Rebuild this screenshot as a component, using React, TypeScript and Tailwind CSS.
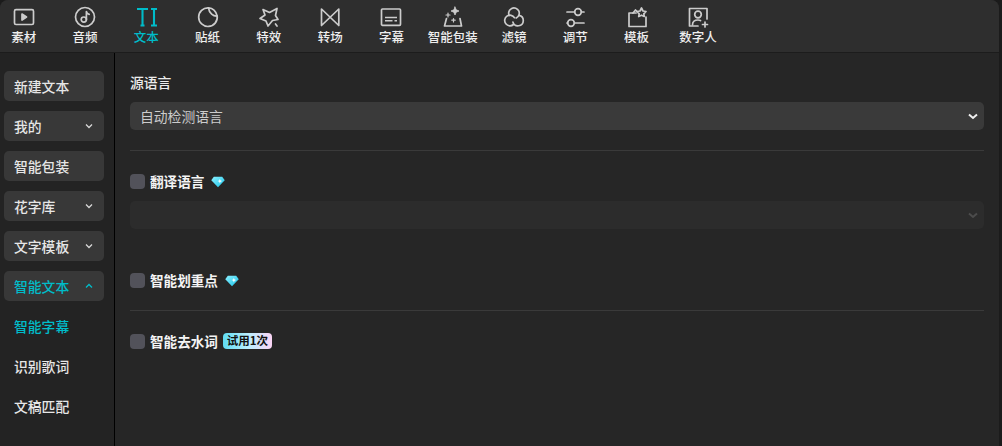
import React from "react";

const stroke = "#cccccc";
const active = "#00bcc9";

const common = { fill: "none", strokeWidth: 1.7, strokeLinecap: "round" as const, strokeLinejoin: "round" as const };

const icons: Record<string, (c: string) => React.ReactNode> = {
  material: (c) => (
    <g {...common} stroke={c}>
      <rect x="2.5" y="4.7" width="19" height="14.8" rx="1.5" />
      <path d="M10 9 L14.5 12 L10 15 Z" fill={c} />
    </g>
  ),
  audio: (c) => (
    <g {...common} stroke={c}>
      <circle cx="12" cy="12" r="9.5" />
      <circle cx="10.8" cy="14.6" r="2.6" />
      <path d="M13.4 14.6 V6.5 Q13.8 8.8 16.2 9.4" />
    </g>
  ),
  text: (c) => (
    <g fill="none" stroke={c} strokeWidth="2.1">
      <path d="M3 4 H14 M8.5 4 V20.5 M6.5 20.5 H10.5" />
      <path d="M17 4 H23 M20 4 V20.5 M17 20.5 H23" />
    </g>
  ),
  sticker: (c) => (
    <g {...common} stroke={c}>
      <path d="M12.5 2.9 A9.3 9.3 0 1 0 21.2 11" />
      <path d="M12.5 2.9 C17 3.2 20 6.5 21.2 11 C17.5 11.5 13 8 12.5 2.9 Z" />
    </g>
  ),
  effect: (c) => (
    <g {...common} stroke={c}>
      <path d="M6 4.5 L12.5 7.5 L20 3.5 L18.5 10.5 L21 14.5 L15.5 15.5 L11 21 L9 16 L3 13.5 L8 10 Z" />
      <path d="M18.5 19 L20 21" />
    </g>
  ),
  transition: (c) => (
    <g {...common} stroke={c}>
      <path d="M3.5 4 L20.8 20.5 V4 L3.5 20.5 Z" />
    </g>
  ),
  caption: (c) => (
    <g {...common} stroke={c}>
      <rect x="2.5" y="4" width="19" height="16.3" rx="1" />
      <path d="M6 12.5 H18 M6 15.7 H13.5 M15.5 15.7 H18" strokeLinecap="butt" strokeWidth="1.4" />
    </g>
  ),
  packaging: (c) => (
    <g {...common} stroke={c}>
      <path d="M5.5 13.5 L3.5 21 H20.5 L19 13.5" />
      <path d="M14 2 L15.2 4.8 L18 6 L15.2 7.2 L14 10 L12.8 7.2 L10 6 L12.8 4.8 Z" fill={c} strokeWidth="0.8" />
      <path d="M7 8 V12 M5 10 H9 M12.5 13.5 V17 M10.8 15.2 H14.2" strokeWidth="1.2" />
    </g>
  ),
  filter: (c) => (
    <g {...common} stroke={c}>
      <path d="M7.2 10.5 A5.3 5.3 0 1 1 14.2 13" />
      <path d="M17 10.3 A5.3 5.3 0 1 1 10.9 17" />
      <path d="M11.5 19.5 A5.3 5.3 0 1 1 12.5 12.7" />
    </g>
  ),
  adjust: (c) => (
    <g {...common} stroke={c}>
      <path d="M4 7 H11.5 M18.5 7 H21 M4 18 H4.5 M11.5 18 H21" />
      <circle cx="15" cy="7" r="3.3" />
      <circle cx="8" cy="18" r="3.3" />
    </g>
  ),
  template: (c) => (
    <g {...common} stroke={c}>
      <path d="M11 8 H4 V21.5 H21 V12" />
      <path d="M8 8 L10.5 5 L12 6.5" />
      <path d="M16.5 3 L18 6 L21 6.5 L18.8 8.8 L19.3 11.5 L16.5 10.2 L13.7 11.5 L14.2 8.8 L12 6.5 L15 6 Z" />
    </g>
  ),
  avatar: (c) => (
    <g {...common} stroke={c}>
      <path d="M12 21 H3.5 V3.5 H21 V14" />
      <circle cx="12" cy="9.5" r="3.3" />
      <path d="M6.5 20 Q6.5 15 12 15 Q13.5 15 14.5 15.5" />
      <path d="M19 17 V22 M16.5 19.5 H21.5" />
    </g>
  ),
};

const tabs = [
  ["素材", "material"],
  ["音频", "audio"],
  ["文本", "text"],
  ["贴纸", "sticker"],
  ["特效", "effect"],
  ["转场", "transition"],
  ["字幕", "caption"],
  ["智能包装", "packaging"],
  ["滤镜", "filter"],
  ["调节", "adjust"],
  ["模板", "template"],
  ["数字人", "avatar"],
];

function Chevron({ up, color }: { up?: boolean; color: string }) {
  return (
    <svg width="8" height="6" viewBox="0 0 8 6" fill="none">
      <path d={up ? "M1 4.5 L4 1.5 L7 4.5" : "M1 1.5 L4 4.5 L7 1.5"} stroke={color} strokeWidth="1.3" />
    </svg>
  );
}

function SelectChevron({ color }: { color: string }) {
  return (
    <svg width="10" height="7" viewBox="0 0 10 7" fill="none">
      <path d="M1 1.5 L5 5 L9 1.5" stroke={color} strokeWidth="2" />
    </svg>
  );
}

function Diamond({ id }: { id: string }) {
  return (
    <svg width="14" height="12" viewBox="0 0 15 12" className="translate-y-[1px]">
      <defs>
        <linearGradient id={id} x1="0" y1="0" x2="1" y2="1">
          <stop offset="0" stopColor="#8df0ff" />
          <stop offset="1" stopColor="#18c4ea" />
        </linearGradient>
      </defs>
      <path d="M3 0.5 H12 L14.7 4 L7.5 11.5 L0.3 4 Z" fill={`url(#${id})`} />
      <path d="M9.5 2.5 L10.2 4.3 L12 5 L10.2 5.7 L9.5 7.5 L8.8 5.7 L7 5 L8.8 4.3 Z" fill="#ffffff" />
    </svg>
  );
}

function SideButton({ label, chevron, on }: { label: string; chevron?: "up" | "down"; on?: boolean }) {
  return (
    <div className="flex h-[30px] w-[100px] items-center justify-between rounded-[5px] bg-[#383838] pr-[11px] pl-2.5">
      <span className={`text-[13.8px] font-medium ${on ? "text-[#00bcc9]" : "text-[#e6e6e6]"}`}>{label}</span>
      {chevron && <Chevron up={chevron === "up"} color={on ? "#00bcc9" : "#d8d8d8"} />}
    </div>
  );
}

function Check({ label, children }: { label: string; children?: React.ReactNode }) {
  return (
    <div className="flex h-[16px] items-center">
      <div className="h-[15px] w-[15px] rounded-[4px] bg-[#52525a]" />
      <span className="ml-[5px] text-[13.6px] font-bold text-[#f4f4f4]">{label}</span>
      {children}
    </div>
  );
}

export default function App() {
  return (
    <div
      className="h-[446px] w-[1002px] overflow-hidden bg-[#1b1b1b]"
      style={{ fontFamily: '"Noto Sans CJK SC", "Liberation Sans", sans-serif' }}
    >
      <div className="flex h-full w-[999px] flex-col overflow-hidden rounded-t-lg bg-[#262626]">
        <div className="flex h-[53px] shrink-0 border-b border-[#1c1c1c] bg-[#2e2e2e]">
          <div className="-ml-[7px] flex">
            {tabs.map(([label, key]) => {
              const on = label === "文本";
              return (
                <div key={key} className="flex w-[61.3px] flex-col items-center pt-[5px]">
                  <svg width="24" height="24" viewBox="0 0 24 24">
                    {icons[key](on ? active : stroke)}
                  </svg>
                  <span
                    className={`whitespace-nowrap text-[12.5px] leading-[16px] font-medium ${
                      on ? "text-[#00bcc9]" : "text-[#eeeeee]"
                    }`}
                  >
                    {label}
                  </span>
                </div>
              );
            })}
          </div>
        </div>
        <div className="flex min-h-0 flex-1">
          <div className="flex w-[115px] shrink-0 flex-col gap-[10px] border-r border-black bg-[#232323] pt-[18px] pl-1">
            <SideButton label="新建文本" />
            <SideButton label="我的" chevron="down" />
            <SideButton label="智能包装" />
            <SideButton label="花字库" chevron="down" />
            <SideButton label="文字模板" chevron="down" />
            <SideButton label="智能文本" chevron="up" on />
            <div className="flex h-[30px] items-center pl-2.5 text-[13.8px] font-medium text-[#00bcc9]">智能字幕</div>
            <div className="flex h-[30px] items-center pl-2.5 text-[13.8px] font-medium text-[#e6e6e6]">识别歌词</div>
            <div className="flex h-[30px] items-center pl-2.5 text-[13.8px] font-medium text-[#e6e6e6]">文稿匹配</div>
          </div>
          <div className="flex flex-1 flex-col pt-[19px] pr-[15px] pl-[15px]">
            <div className="text-[13.8px] leading-[20px] font-medium text-[#ececec]">源语言</div>
            <div className="mt-[10px] flex h-[28px] items-center justify-between rounded-[5px] bg-[#3a3a3a] pr-[6px] pl-2.5">
              <span className="text-[13.8px] text-[#cccccc]">自动检测语言</span>
              <SelectChevron color="#f0f0f0" />
            </div>
            <div className="mt-[20px] h-px bg-[#3a3a3a]" />
            <div className="mt-[22px]">
              <Check label="翻译语言">
                <span className="ml-[7px] flex">
                  <Diamond id="dg1" />
                </span>
              </Check>
            </div>
            <div className="mt-[12px] flex h-[28px] items-center justify-end rounded-[5px] bg-[#2c2c2c] pr-[6px]">
              <SelectChevron color="#4c4c4c" />
            </div>
            <div className="mt-[43px]">
              <Check label="智能划重点">
                <span className="ml-[7px] flex">
                  <Diamond id="dg2" />
                </span>
              </Check>
            </div>
            <div className="mt-[22px] h-px bg-[#3a3a3a]" />
            <div className="mt-[22px]">
              <Check label="智能去水词">
                <span className="ml-[5px] flex h-[16px] w-[49px] items-center justify-center rounded-[4px] bg-[linear-gradient(90deg,#5fdcf2,#b8efff_50%,#fbd4f4)] text-[11.5px] leading-none font-bold text-[#111111]">
                  试用1次
                </span>
              </Check>
            </div>
          </div>
        </div>
      </div>
    </div>
  );
}
